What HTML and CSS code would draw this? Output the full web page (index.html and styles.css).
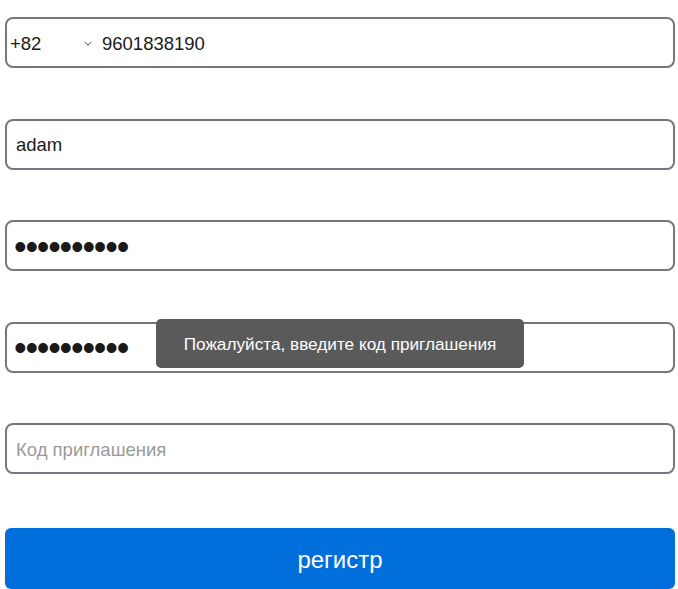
FILE: index.html
```html
<!DOCTYPE html>
<html lang="ru">
<head>
<meta charset="utf-8">
<title>Регистрация</title>
<link rel="stylesheet" href="styles.css">
</head>
<body>
<form class="form">
  <div class="field phone">
    <div class="code">
      <span class="code-value">+82</span>
      <svg class="chev" width="8" height="5" viewBox="0 0 8 5"><path d="M0.5 0.8l3.5 3.4 3.5-3.4" fill="none" stroke="#444" stroke-width="1"/></svg>
    </div>
    <input class="input" type="text" value="9601838190">
  </div>
  <div class="field">
    <input class="input" type="text" value="adam">
  </div>
  <div class="field">
    <input class="input pass" type="password" value="aaaaaaaaaa">
  </div>
  <div class="field tip-host">
    <input class="input pass" type="password" value="aaaaaaaaaa">
    <div class="tooltip">Пожалуйста, введите код приглашения</div>
  </div>
  <div class="field">
    <input class="input" type="text" placeholder="Код приглашения">
  </div>
  <button class="submit" type="button">регистр</button>
</form>
</body>
</html>
```
FILE: styles.css
```css
html, body {
  margin: 0;
  padding: 0;
  background: #fff;
}
body {
  font-family: "Liberation Sans", Arial, sans-serif;
  color: #1a1a1a;
}
.form {
  width: 670px;
  margin-left: 5px;
  padding-top: 17px;
  display: flex;
  flex-direction: column;
}
.field {
  box-sizing: border-box;
  height: 51px;
  border: 2px solid #77757f;
  border-radius: 8px;
  display: flex;
  align-items: center;
  margin-bottom: 50.5px;
  background: #fff;
}
.field:nth-child(5) {
  margin-bottom: 54px;
}
.input {
  flex: 1;
  min-width: 0;
  border: none;
  outline: none;
  background: transparent;
  font-family: "Liberation Sans", Arial, sans-serif;
  font-size: 18.5px;
  color: #1a1a1a;
  padding: 2px 0 0 9px;
  height: 100%;
  box-sizing: border-box;
}
.input::placeholder {
  color: #9a9a9a;
}
.pass {
  font-size: 36px;
  letter-spacing: -1.2px;
  padding-left: 7px;
}
.phone .input {
  padding-left: 0;
}
.code {
  width: 95px;
  display: flex;
  align-items: center;
  padding: 2px 0 0 3px;
  box-sizing: border-box;
  font-size: 18.5px;
}
.code-value {
  flex: 1;
}
.chev {
  margin-right: 10px;
}
.tip-host {
  position: relative;
}
.tooltip {
  position: absolute;
  left: 149px;
  top: -5px;
  width: 368px;
  height: 49px;
  box-sizing: border-box;
  padding-top: 3px;
  background: #5a5a5a;
  border-radius: 5px;
  color: #fff;
  font-size: 17.2px;
  display: flex;
  align-items: center;
  justify-content: center;
}
.submit {
  height: 61px;
  border: none;
  border-radius: 6px;
  background: #006fdc;
  color: #fff;
  font-family: "Liberation Sans", Arial, sans-serif;
  font-size: 24px;
  padding: 2px 0 0;
}
```
